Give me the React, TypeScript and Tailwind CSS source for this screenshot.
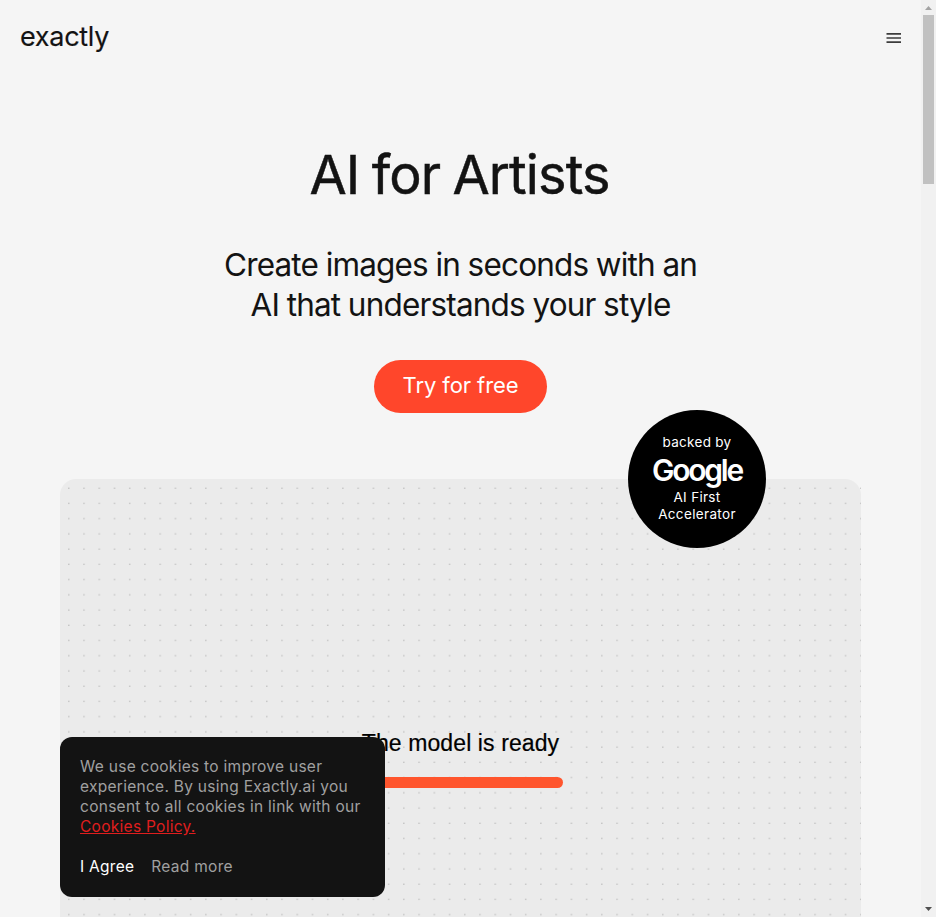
const inter = "font-['Inter','Liberation_Sans',sans-serif]";

function Header() {
  return (
    <header className="flex h-[76px] shrink-0 items-center justify-between pl-5 pr-5">
      <a className="-mt-[3px] text-[27px] leading-8 tracking-[-0.3px] [-webkit-text-stroke:0.15px_#131313]">exactly</a>
      <button aria-label="Menu" className="flex">
        <svg width="15" height="12" viewBox="0 0 15 12" className="block">
          <path d="M0.5 1.9h14.5M0.5 6h14.5M0.5 10.1h14.5" stroke="#3c3c3c" strokeWidth="1.6" />
        </svg>
      </button>
    </header>
  );
}

function Hero() {
  return (
    <section className="flex shrink-0 flex-col items-center text-center">
      <h1 className="mt-[64px] -translate-x-px text-[54px] leading-[70px] tracking-[-0.9px] [-webkit-text-stroke:0.5px_#131313] [word-spacing:-2px]">
        AI for Artists
      </h1>
      <p className="mt-[35px] text-[31.5px] leading-10 tracking-[-0.82px] [word-spacing:-0.5px]">
        Create images in seconds with an
        <br />
        AI that understands your style
      </p>
      <button className="mt-[35px] h-[53px] w-[173px] rounded-full bg-[#ff462b] pb-[3px] text-[22px] tracking-[-0.1px] text-white">
        Try for free
      </button>
    </section>
  );
}

function Badge() {
  return (
    <div className="absolute left-[568px] top-[-69px] flex size-[138px] flex-col items-center rounded-full bg-black pt-[24px] text-[13.5px] leading-[17px] text-white">
      <span className="tracking-[0.3px]">backed by</span>
      <span className="text-[30px] font-semibold leading-[38px] tracking-[-2.2px]">Google</span>
      <span className="tracking-[0.3px]">AI First</span>
      <span className="tracking-[0.35px]">Accelerator</span>
    </div>
  );
}

function Dots() {
  return (
    <svg className="absolute inset-0 size-full" aria-hidden="true">
      <defs>
        <pattern id="dots" x="8" y="8" width="15.23" height="15.23" patternUnits="userSpaceOnUse">
          <rect x="0.2" y="0.6" width="1.2" height="1.2" fill="#b4b4b4" />
        </pattern>
      </defs>
      <rect width="100%" height="100%" fill="url(#dots)" />
    </svg>
  );
}

function Preview() {
  return (
    <section className="relative mx-[60px] mt-[66px] h-[520px] shrink-0 rounded-2xl bg-[#ebebeb]">
      <Dots />
      <div className="relative flex flex-col items-center pt-[250px] font-['Liberation_Sans',Arial,sans-serif] text-black">
        <p className="text-[23px] leading-7 tracking-[0.1px] [-webkit-text-stroke:0.2px_black]">The model is ready</p>
        <div className="mt-[20px] h-[11px] w-[205px] rounded-full bg-[#ff552d]" />
      </div>
      <Badge />
    </section>
  );
}

function CookieNotice() {
  return (
    <aside className="absolute bottom-5 left-[60px] h-[160px] w-[325px] rounded-xl bg-[#131313] px-5 pt-5 text-[15.5px] leading-5 tracking-[0.28px] text-[#a0a0a0]">
      <p className="whitespace-nowrap">
        We use cookies to improve user
        <br />
        experience. By using Exactly.ai you
        <br />
        consent to all cookies in link with our
        <br />
        <a className="text-[#e01e1e] underline">Cookies Policy.</a>
      </p>
      <div className="mt-5 flex gap-[17px]">
        <button className="text-white">I Agree</button>
        <button>Read more</button>
      </div>
    </aside>
  );
}

function Scrollbar() {
  return (
    <div className="flex w-[15px] shrink-0 flex-col items-center bg-[#f1f1f1]">
      <svg width="15" height="15" className="block shrink-0">
        <path d="M4 10h7L7.5 6z" fill="#a3a3a3" />
      </svg>
      <div className="h-[169px] w-[11px] bg-[#c1c1c1]" />
      <svg width="15" height="15" className="mt-auto block shrink-0">
        <path d="M4 5h7L7.5 9z" fill="#505050" />
      </svg>
    </div>
  );
}

export default function App() {
  return (
    <div className={`${inter} relative flex h-[917px] w-[936px] overflow-hidden bg-[#f5f5f5] text-[#131313]`}>
      <main className="flex w-[921px] flex-col overflow-hidden">
        <Header />
        <Hero />
        <Preview />
      </main>
      <Scrollbar />
      <CookieNotice />
    </div>
  );
}
